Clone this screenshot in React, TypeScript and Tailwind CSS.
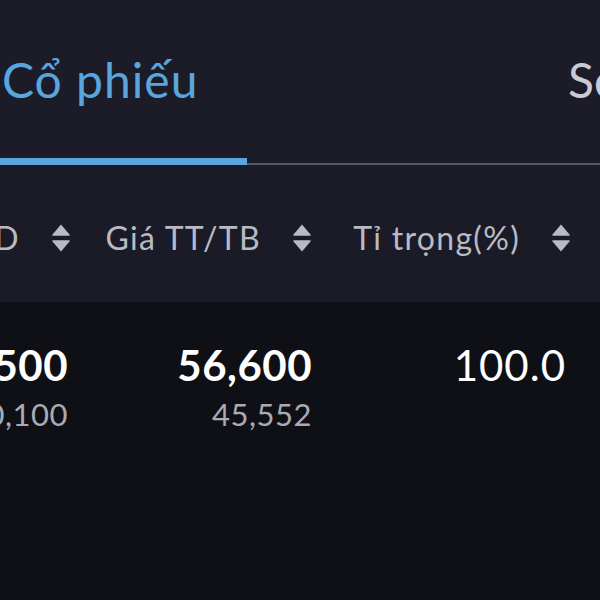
import React from "react";

const SortIcon = () => (
  <svg width="22" height="30" viewBox="0 0 22 30" className="shrink-0">
    <path d="M11 1.5 L19.5 11.5 Q20.3 12.8 18.8 12.8 L3.2 12.8 Q1.7 12.8 2.5 11.5 Z" fill="#b9bac4" />
    <path d="M11 28.5 L19.5 18.5 Q20.3 17.2 18.8 17.2 L3.2 17.2 Q1.7 17.2 2.5 18.5 Z" fill="#b9bac4" />
  </svg>
);

const columns = [
  { label: "D", width: "w-[90px]", pr: "pr-[22px]", main: "500", sub: "0,100", bold: true },
  { label: "Giá TT/TB", width: "w-[241px]", pr: "pr-[19px]", main: "56,600", sub: "45,552", bold: true },
  { label: "Tỉ trọng(%)", width: "w-[259px]", pr: "pr-[24px]", main: "100.0", sub: "", bold: false },
];

export default function App() {
  return (
    <div
      className="w-[600px] h-[600px] overflow-hidden bg-[#0f1016] flex flex-col"
      style={{ fontFamily: "Lato, 'Noto Sans', sans-serif" }}
    >
      {/* Tabs */}
      <div className="h-[165px] bg-[#1b1c27] flex flex-col shrink-0">
        <div className="flex-1 flex items-center justify-between pt-[4px]">
          <span className="text-[#5ba5df] text-[48px] tracking-[1px] leading-none pl-[2px] -mt-[2px]">Cổ phiếu</span>
          <span className="text-[#c9cad2] text-[48px] leading-none -mr-[22px] -mt-[2px] w-[54px] overflow-hidden">Se</span>
        </div>
        <div className="flex items-end h-[8px]">
          <div className="w-[247px] h-[7px] bg-[#5ba5df]" />
          <div className="flex-1 h-[2px] bg-[#56575f]" />
        </div>
      </div>

      {/* Header */}
      <div className="h-[137px] bg-[#1a1b26] flex items-center shrink-0 pt-[8px]">
        {columns.map((c) => (
          <div key={c.label} className={`${c.width} shrink-0 flex items-center justify-end gap-[30px] pr-[18px]`}>
            <span className="text-[#b9bac4] text-[32px] tracking-[1.3px] leading-none whitespace-nowrap">{c.label}</span>
            <SortIcon />
          </div>
        ))}
      </div>

      {/* Row */}
      <div className="flex pt-[40px]">
        {columns.map((c) => (
          <div key={c.label} className={`${c.width} shrink-0 flex flex-col items-end ${c.pr}`}>
            <span
              className={`text-white text-[42px] tracking-[0.5px] leading-[46px] ${c.bold ? "font-bold" : "font-normal tracking-[1px]"}`}
            >
              {c.main}
            </span>
            {c.sub && <span className="text-[#a9aab3] text-[31px] tracking-[0.5px] leading-[36px] mt-[8px]">{c.sub}</span>}
          </div>
        ))}
      </div>
    </div>
  );
}
